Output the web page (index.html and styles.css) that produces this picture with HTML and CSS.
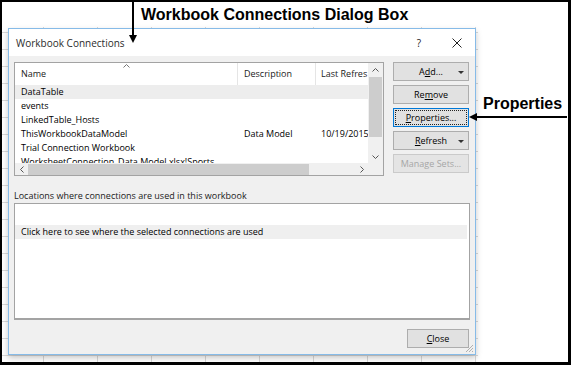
FILE: index.html
```html
<!DOCTYPE html>
<html lang="en">
<head>
  <meta charset="UTF-8">
  <meta name="viewport" content="width=device-width, initial-scale=1.0">
  <title>Workbook Connections Dialog Box</title>
  <link rel="stylesheet" href="styles.css">
</head>
<body>
  <div class="frame">
    <div class="caption">Workbook Connections Dialog Box</div>

    <div class="sheet">
      <div class="dialog">
        <div class="titlebar">
          <span class="title">Workbook Connections</span>
          <span class="help">?</span>
          <svg class="close-x" width="10" height="10" viewBox="0 0 10 10">
            <path d="M0.5 0.5 L9.5 9.5 M9.5 0.5 L0.5 9.5" stroke="#222" stroke-width="1" fill="none"/>
          </svg>
        </div>

        <div class="dialog-body">
          <div class="top-row">
            <div class="listview">
              <div class="lv-main">
                <div class="lv-header">
                  <div class="col col-name">Name
                    <svg class="sort-caret" width="7" height="4" viewBox="0 0 7 4"><path d="M0.5 3.5 L3.5 0.5 L6.5 3.5" stroke="#777" fill="none"/></svg>
                  </div>
                  <div class="col col-desc">Description</div>
                  <div class="col col-date">Last Refres</div>
                </div>
                <div class="lv-rows">
                  <div class="lv-row selected"><span class="col col-name">DataTable</span></div>
                  <div class="lv-row"><span class="col col-name">events</span></div>
                  <div class="lv-row"><span class="col col-name">LinkedTable_Hosts</span></div>
                  <div class="lv-row">
                    <span class="col col-name">ThisWorkbookDataModel</span>
                    <span class="col col-desc">Data Model</span>
                    <span class="col col-date">10/19/2015</span>
                  </div>
                  <div class="lv-row"><span class="col col-name">Trial Connection Workbook</span></div>
                  <div class="lv-row"><span class="col col-name">WorksheetConnection_Data Model.xlsx!Sports</span></div>
                </div>
                <div class="hscroll">
                  <div class="sb-btn">
                    <svg width="4" height="7" viewBox="0 0 4 7"><path d="M3.5 0.5 L0.5 3.5 L3.5 6.5" stroke="#555" fill="none"/></svg>
                  </div>
                  <div class="sb-track"><div class="h-thumb"></div></div>
                  <div class="sb-btn">
                    <svg width="4" height="7" viewBox="0 0 4 7"><path d="M0.5 0.5 L3.5 3.5 L0.5 6.5" stroke="#555" fill="none"/></svg>
                  </div>
                </div>
              </div>
              <div class="vscroll">
                <div class="sb-btn">
                  <svg width="7" height="4" viewBox="0 0 7 4"><path d="M0.5 3.5 L3.5 0.5 L6.5 3.5" stroke="#555" fill="none"/></svg>
                </div>
                <div class="sb-track"><div class="v-thumb"></div></div>
                <div class="sb-btn">
                  <svg width="7" height="4" viewBox="0 0 7 4"><path d="M0.5 0.5 L3.5 3.5 L6.5 0.5" stroke="#555" fill="none"/></svg>
                </div>
                <div class="sb-corner"></div>
              </div>
            </div>

            <div class="buttons">
              <button class="btn has-menu">A<u>d</u>d...<span class="caret"></span></button>
              <button class="btn">Re<u>m</u>ove</button>
              <button class="btn focused"><u>P</u>roperties...</button>
              <button class="btn has-menu"><u>R</u>efresh<span class="caret"></span></button>
              <button class="btn" disabled>Manage Sets...</button>
            </div>
          </div>

          <div class="section-label">Locations where connections are used in this workbook</div>
          <div class="locations">
            <div class="loc-row">Click here to see where the selected connections are used</div>
          </div>

          <div class="footer">
            <button class="btn btn-close"><u>C</u>lose</button>
          </div>
        </div>

        <svg class="grip" width="9" height="9" viewBox="0 0 9 9">
          <path d="M8 1 L1 8 M8 4 L4 8 M8 7 L7 8" stroke="#b0b0b0" stroke-width="1" fill="none"/>
        </svg>
      </div>
    </div>

    <!-- callout arrows -->
    <svg class="arrow-down" width="12" height="42" viewBox="0 0 12 42">
      <rect x="5" y="0" width="2" height="34" fill="#000"/>
      <polygon points="2,33 10,33 6,41" fill="#000"/>
    </svg>
    <div class="callout">Properties</div>
    <svg class="arrow-left" width="98" height="10" viewBox="0 0 98 10">
      <rect x="7" y="4" width="91" height="2" fill="#000"/>
      <polygon points="0,5 8,1 8,9" fill="#000"/>
    </svg>
  </div>
</body>
</html>
```

FILE: styles.css
```css
body {
  margin: 0;
  background: #fff;
}

.frame {
  position: relative;
  width: 571px;
  height: 365px;
  box-sizing: border-box;
  border-style: solid;
  border-color: #000;
  border-width: 2px 3px 3px 2px;
  background: #fff;
  overflow: hidden;
}

.caption {
  height: 25px;
  box-sizing: border-box;
  padding: 1px 0 0 139px;
  font-family: "Liberation Sans", Arial, sans-serif;
  font-weight: bold;
  font-size: 16px;
  line-height: 24px;
  color: #000;
}

/* the excel sheet peeking out behind the dialog */
.sheet {
  width: 476px;
  height: 335px;
  box-sizing: border-box;
  padding: 1px 0 0 6px;
  background-color: #fff;
  background-image:
    linear-gradient(#d9d9d9 1px, transparent 1px),
    linear-gradient(90deg, #d9d9d9 1px, transparent 1px);
  background-size: 54px 17px;
  background-position: -13px 5px;
}

.dialog {
  position: relative;
  width: 468px;
  height: 327px;
  box-sizing: border-box;
  border: 1px solid #86bbe8;
  background: #f0f0f0;
  box-shadow: 0 3px 6px rgba(0,0,0,0.22);
  font-family: "Open Sans", "Noto Sans", sans-serif;
  font-size: 9px;
  color: #000;
  display: flex;
  flex-direction: column;
}

.titlebar {
  height: 27px;
  flex: none;
  background: #fff;
  display: flex;
  align-items: center;
  padding: 0 13px 0 7px;
}

.title {
  font-size: 10px;
  color: #2b2b2b;
}

.help {
  margin-left: auto;
  margin-right: 31px;
  font-size: 10px;
  color: #222;
}

.close-x {
  display: block;
}

.dialog-body {
  flex: 1;
  padding: 6px 5px 0 5px;
  display: flex;
  flex-direction: column;
}

.top-row {
  display: flex;
  gap: 9px;
}

/* list view */
.listview {
  width: 370px;
  height: 114px;
  box-sizing: border-box;
  border: 1px solid #a3a3a3;
  background: #fff;
  display: flex;
}

.lv-main {
  width: 353px;
  display: flex;
  flex-direction: column;
}

.lv-header {
  height: 22px;
  flex: none;
  display: flex;
}

.lv-header .col {
  height: 22px;
  line-height: 22px;
  border-right: 1px solid #e5e5e5;
  color: #1a1a1a;
}

.lv-header .col-date {
  border-right: none;
}

.col {
  position: relative;
  box-sizing: border-box;
  padding-left: 6px;
  white-space: nowrap;
  overflow: visible;
}

.col-name {
  width: 223px;
  flex: none;
}

.col-desc {
  width: 78px;
  flex: none;
}

.col-date {
  flex: 1;
  padding-left: 5px;
  overflow: hidden;
}

.sort-caret {
  position: absolute;
  left: 108px;
  top: 1px;
}

.lv-rows {
  flex: 1;
  overflow: hidden;
}

.lv-row {
  height: 14px;
  line-height: 14px;
  display: flex;
}

.lv-row.selected {
  background: #ededed;
}

.hscroll {
  height: 12px;
  flex: none;
  display: flex;
  background: #f0f0f0;
}

.hscroll .sb-btn {
  width: 13px;
}

.hscroll .sb-track {
  flex: 1;
  display: flex;
  align-items: center;
}

.h-thumb {
  width: 281px;
  height: 11px;
  background: #cdcdcd;
}

.sb-btn {
  display: flex;
  align-items: center;
  justify-content: center;
  flex: none;
}

.vscroll {
  width: 15px;
  display: flex;
  flex-direction: column;
  background: #f0f0f0;
}

.vscroll .sb-btn {
  height: 13px;
}

.vscroll .sb-track {
  flex: 1;
  padding: 1px 1px 0 1px;
}

.v-thumb {
  height: 60px;
  background: #cdcdcd;
}

.sb-corner {
  height: 12px;
  flex: none;
  background: #f0f0f0;
}

/* command buttons */
.buttons {
  width: 76px;
  display: flex;
  flex-direction: column;
  gap: 4px;
}

.btn {
  position: relative;
  height: 19px;
  box-sizing: border-box;
  padding: 0;
  border: 1px solid #adadad;
  background: #e1e1e1;
  font-family: "Open Sans", "Noto Sans", sans-serif;
  font-size: 9px;
  color: #000;
  text-align: center;
}

.btn.focused {
  border-color: #0078d7;
  outline: 1px dotted #222;
  outline-offset: -3px;
}

.btn:disabled {
  background: #e4e4e4;
  border-color: #cacaca;
  color: #a6a6a6;
}

.caret {
  position: absolute;
  right: 4px;
  top: 8px;
  width: 0;
  height: 0;
  border-left: 3px solid transparent;
  border-right: 3px solid transparent;
  border-top: 3px solid #333;
}

.section-label {
  margin-top: 13px;
  height: 14px;
  line-height: 14px;
  color: #1a1a1a;
}

.locations {
  height: 117px;
  box-sizing: border-box;
  border: 1px solid #a3a3a3;
  border-bottom-width: 2px;
  background: #fff;
  padding-top: 21px;
}

.loc-row {
  height: 14px;
  line-height: 14px;
  margin-right: 2px;
  padding-left: 6px;
  background: #efefef;
}

.footer {
  margin-top: 9px;
  display: flex;
  justify-content: flex-end;
  padding-right: 1px;
}

.btn-close {
  width: 62px;
}

.grip {
  position: absolute;
  right: 1px;
  bottom: 1px;
}

/* annotation overlays */
.arrow-down {
  position: absolute;
  left: 125px;
  top: 0;
}

.callout {
  position: absolute;
  left: 481px;
  top: 94px;
  font-family: "Liberation Sans", Arial, sans-serif;
  font-weight: bold;
  font-size: 16px;
  line-height: 16px;
  color: #000;
}

.arrow-left {
  position: absolute;
  left: 467px;
  top: 110px;
}
```
